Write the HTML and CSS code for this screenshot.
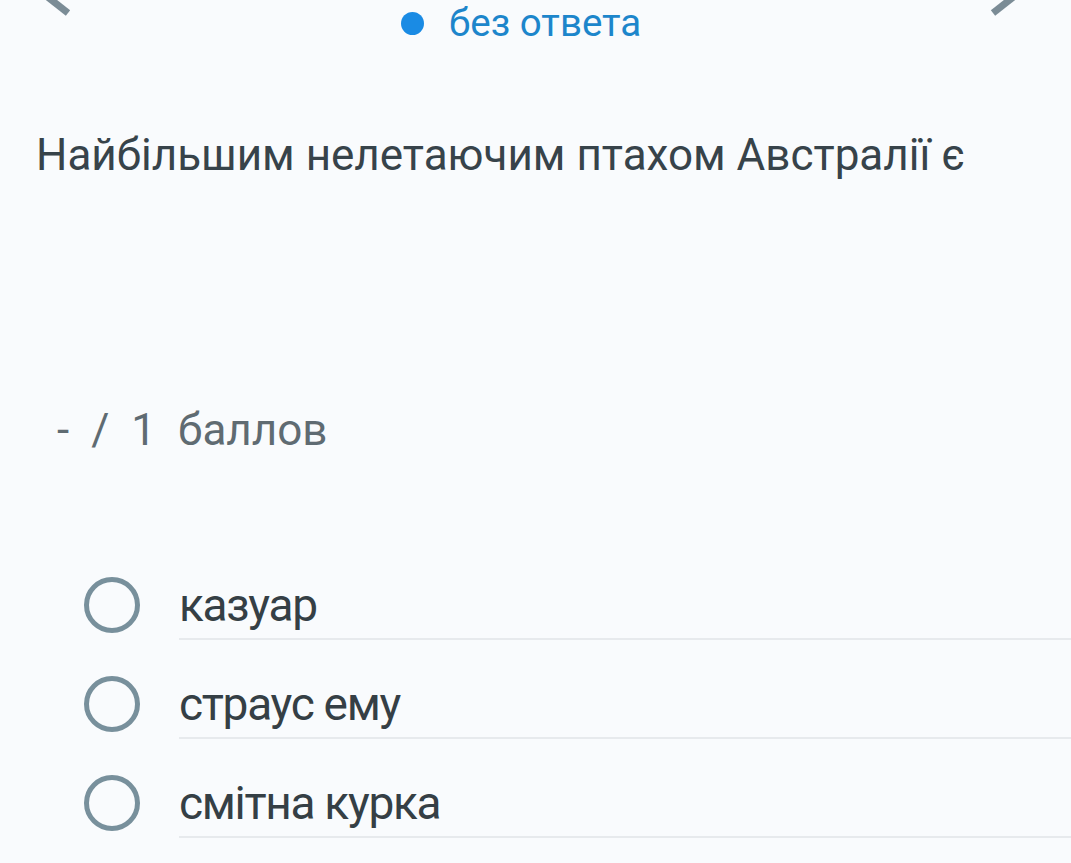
FILE: index.html
```html
<!DOCTYPE html>
<html lang="uk">
<head>
<meta charset="utf-8">
<title>Питання</title>
<link rel="stylesheet" href="styles.css">
</head>
<body>
<div class="page">
  <header class="topbar">
    <svg class="chev chev-left" width="100" height="16" viewBox="0 0 100 16"><path d="M40 -9 L68 13" stroke="#7b8c96" stroke-width="7" fill="none"/></svg>
    <div class="status"><span class="dot"></span><span class="status-text">без ответа</span></div>
    <svg class="chev chev-right" width="100" height="16" viewBox="0 0 100 16"><path d="M22 13 L50 -9" stroke="#7b8c96" stroke-width="7" fill="none"/></svg>
  </header>

  <h1 class="question">Найбільшим нелетаючим птахом Австралії є</h1>

  <div class="score"><span>-</span><span>/</span><span>1</span><span>баллов</span></div>

  <ul class="options">
    <li class="option"><span class="radio"></span><span class="label">казуар</span></li>
    <li class="option"><span class="radio"></span><span class="label">страус ему</span></li>
    <li class="option"><span class="radio"></span><span class="label">смітна курка</span></li>
  </ul>
</div>
</body>
</html>
```

FILE: styles.css
```css
html, body {
  margin: 0;
  padding: 0;
  background: #f9fbfd;
}
body {
  font-family: Roboto, "Noto Sans", sans-serif;
  width: 1071px;
  height: 863px;
  overflow: hidden;
}
.page {
  display: flex;
  flex-direction: column;
}
.topbar {
  display: flex;
  align-items: flex-start;
  height: 46px;
}
.chev {
  display: block;
  flex: none;
}
.chev-right {
  margin-left: auto;
}
.status {
  display: flex;
  align-items: center;
  gap: 25px;
  margin-left: 301px;
  height: 46px;
}
.dot {
  width: 23px;
  height: 23px;
  border-radius: 50%;
  background: #1a8be4;
}
.status-text {
  font-size: 38.5px;
  line-height: 46px;
  color: #1d86cb;
}
.question {
  margin: 83px 0 0 36px;
  font-size: 44px;
  line-height: 52px;
  font-weight: 400;
  color: #37434a;
}
.score {
  display: flex;
  gap: 22px;
  margin: 223px 0 0 57px;
  font-size: 44px;
  line-height: 52px;
  color: #5f6b72;
}
.options {
  list-style: none;
  margin: 122px 0 0 0;
  padding: 0;
  display: flex;
  flex-direction: column;
  gap: 37px;
}
.option {
  display: flex;
  align-items: flex-start;
}
.radio {
  flex: none;
  box-sizing: border-box;
  width: 56px;
  height: 56px;
  margin: -1px 0 0 84px;
  border: 5px solid #78909c;
  border-radius: 50%;
}
.label {
  flex: 1;
  margin-left: 39px;
  font-size: 46px;
  line-height: 54px;
  letter-spacing: -1.3px;
  padding-bottom: 6px;
  border-bottom: 2px solid #e7eaed;
  color: #353f45;
}
```
